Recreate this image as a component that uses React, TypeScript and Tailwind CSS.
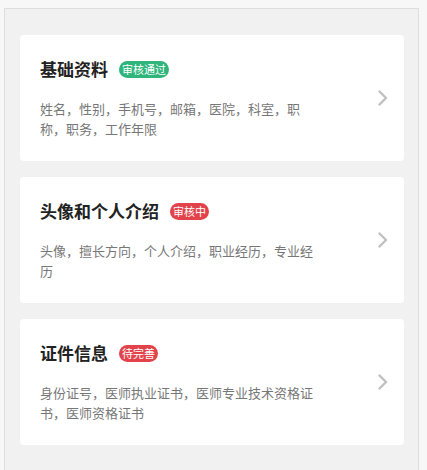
type Item = {
  title: string;
  status: string;
  tone: "green" | "red";
  desc: string;
};

const items: Item[] = [
  {
    title: "基础资料",
    status: "审核通过",
    tone: "green",
    desc: "姓名，性别，手机号，邮箱，医院，科室，职称，职务，工作年限",
  },
  {
    title: "头像和个人介绍",
    status: "审核中",
    tone: "red",
    desc: "头像，擅长方向，个人介绍，职业经历，专业经历",
  },
  {
    title: "证件信息",
    status: "待完善",
    tone: "red",
    desc: "身份证号，医师执业证书，医师专业技术资格证书，医师资格证书",
  },
];

function Chevron() {
  return (
    <svg width="12" height="16" viewBox="0 0 12 16" fill="none" className="text-[#c0c0c0]">
      <polyline
        points="2.5,1.5 9,8 2.5,14.5"
        stroke="currentColor"
        strokeWidth="2.4"
        strokeLinecap="round"
        strokeLinejoin="round"
      />
    </svg>
  );
}

function InfoCard({ item }: { item: Item }) {
  return (
    <div className="flex items-center rounded-[4px] bg-white pl-5 pr-[15px] py-[22px]">
      <div className="flex-1">
        <div className="flex items-center gap-[11px]">
          <h3 className="text-[17px] font-bold leading-6 text-[#222]">{item.title}</h3>
          <span
            className={
              item.tone === "green"
                ? "rounded-full bg-[#2fb57b] px-[3px] text-[11px] leading-[17px] text-white"
                : "rounded-full bg-[#e2434b] px-[3px] text-[11px] leading-[17px] text-white"
            }
          >
            {item.status}
          </span>
        </div>
        <p className="mt-[18px] w-[280px] text-[13px] leading-5 text-[#777]">{item.desc}</p>
      </div>
      <Chevron />
    </div>
  );
}

export default function App() {
  return (
    <div
      className="min-h-[470px] bg-[#f7f7f7] pl-1 pr-2 pt-2"
      style={{ fontFamily: '"Noto Sans CJK SC", "Noto Sans", sans-serif' }}
    >
      <div className="flex min-h-[462px] flex-col gap-4 border border-b-0 border-[#dedede] bg-[#f1f1f1] pl-[15px] pr-[14px] pt-[26px]">
        {items.map((item) => (
          <InfoCard key={item.title} item={item} />
        ))}
      </div>
    </div>
  );
}
